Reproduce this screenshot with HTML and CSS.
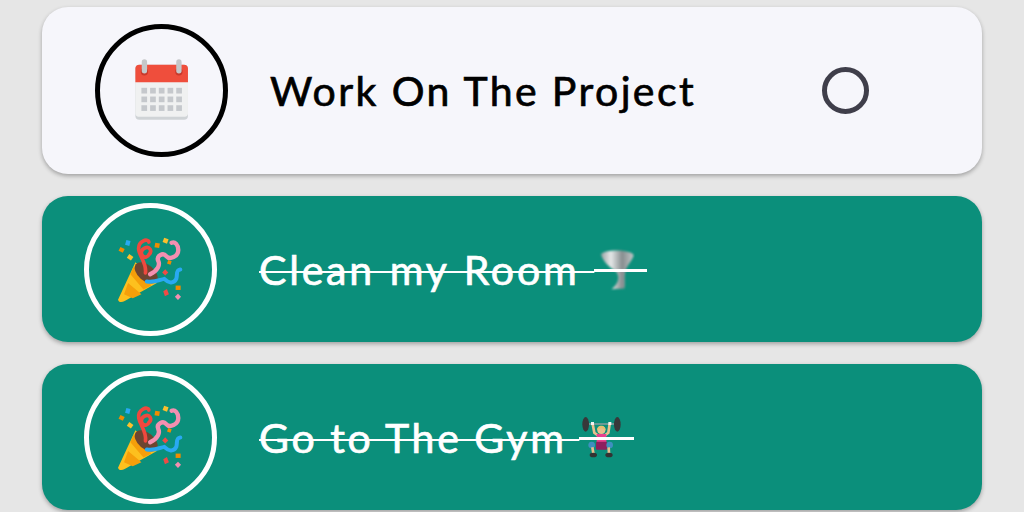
FILE: index.html
```html
<!DOCTYPE html>
<html lang="en">
<head>
  <meta charset="UTF-8">
  <meta name="viewport" content="width=device-width, initial-scale=1.0">
  <title>Tasks</title>
  <link rel="stylesheet" href="styles.css">
</head>
<body>
  <div class="task-list">
    <!-- Open task -->
    <div class="task task-open">
      <div class="task-icon">
        <svg width="67" height="67" viewBox="143 140 200 200">
          <rect x="165" y="163" width="157" height="164" rx="12" fill="#cfd3d6"/>
          <path d="M165 205h157v103a10 10 0 0 1-10 10H175a10 10 0 0 1-10-10z" fill="#f0f1f1"/>
          <path d="M177 163h133a12 12 0 0 1 12 12v40H165v-40a12 12 0 0 1 12-12z" fill="#ef4e3c"/>
          <circle cx="192" cy="184" r="11" fill="#c9392b"/>
          <circle cx="295" cy="184" r="11" fill="#c9392b"/>
          <rect x="184" y="147" width="16" height="42" rx="8" fill="#c5c7c9"/>
          <rect x="287" y="147" width="16" height="42" rx="8" fill="#c5c7c9"/>
          <g fill="#c5c8cc">
            <rect x="183" y="232" width="17" height="17"/><rect x="209" y="232" width="17" height="17"/><rect x="235" y="232" width="17" height="17"/><rect x="261" y="232" width="17" height="17"/><rect x="287" y="232" width="17" height="17"/>
            <rect x="183" y="258" width="17" height="17"/><rect x="209" y="258" width="17" height="17"/><rect x="235" y="258" width="17" height="17"/><rect x="261" y="258" width="17" height="17"/><rect x="287" y="258" width="17" height="17"/>
            <rect x="183" y="284" width="17" height="17"/><rect x="209" y="284" width="17" height="17"/><rect x="235" y="284" width="17" height="17"/><rect x="261" y="284" width="17" height="17"/><rect x="287" y="284" width="17" height="17"/>
          </g>
        </svg>
      </div>
      <div class="task-title">Work On The Project</div>
      <div class="task-check"></div>
    </div>

    <!-- Done tasks -->
    <div class="task task-done">
      <div class="task-icon">
        <svg width="67" height="67" viewBox="143 122 200 200">
          <use href="#popper"/>
        </svg>
      </div>
      <div class="task-title">
        <span class="strike strike-room">Clean my Room&nbsp;</span>
        <span class="emoji emoji-storm">
          <svg width="36" height="43" viewBox="90 25 108 128">
            <defs>
              <linearGradient id="funnel" x1="0" x2="1" y1="0" y2="0">
                <stop offset="0" stop-color="#9aa1a3"/>
                <stop offset="0.3" stop-color="#e6e8e8"/>
                <stop offset="0.65" stop-color="#868d8f"/>
                <stop offset="1" stop-color="#c3c8c9"/>
              </linearGradient>
              <filter id="soft"><feGaussianBlur stdDeviation="2.5"/></filter>
            </defs>
            <path d="M96 44C104 28 186 28 194 46 190 62 174 76 170 92 164 112 170 130 166 146L128 148C146 132 154 116 142 96 124 84 102 66 96 44z" fill="url(#funnel)" filter="url(#soft)"/>
          </svg>
        </span>
      </div>
    </div>

    <div class="task task-done">
      <div class="task-icon">
        <svg width="67" height="67" viewBox="143 122 200 200">
          <g id="popper">
            <path d="M146 312C150 322 158 320 166 316L262 262 198 200z" fill="#fdc01e"/>
            <path d="M164 296 176 262 216 296 190 308zM183 236 192 214 246 270 222 282z" fill="#f59f0a"/>
            <ellipse cx="230" cy="232" rx="40" ry="24" transform="rotate(40 230 232)" fill="#6d4531"/>
            <g fill="none" stroke-linecap="round">
              <path d="M228 232C232 204 212 186 208 164 204 136 236 128 238 140M238 178C250 166 240 152 226 158 216 162 212 174 220 182 226 188 236 184 238 178" stroke="#f0483e" stroke-width="11"/>
              <path d="M242 236C266 224 272 208 266 196 260 182 280 170 290 182 300 194 326 184 326 164 326 148 316 138 306 142" stroke="#f48fb1" stroke-width="13"/>
              <path d="M232 258C256 262 272 252 284 250 296 262 312 266 320 250 324 236 318 224 332 222" stroke="#29a9f2" stroke-width="12"/>
            </g>
            <rect x="169" y="135" width="13" height="15" transform="rotate(15 175 142)" fill="#29a9f2"/>
            <rect x="150" y="157" width="14" height="13" transform="rotate(25 157 163)" fill="#f08c00"/>
            <rect x="175" y="179" width="15" height="13" transform="rotate(35 182 185)" fill="#fbc02d"/>
            <rect x="256" y="143" width="14" height="14" transform="rotate(10 263 150)" fill="#f08c00"/>
            <rect x="281" y="129" width="14" height="14" transform="rotate(20 288 136)" fill="#fbc02d"/>
            <rect x="294" y="195" width="11" height="11" transform="rotate(20 299 200)" fill="#f08c00"/>
            <rect x="281" y="224" width="13" height="13" transform="rotate(45 287 230)" fill="#ef4b45"/>
            <rect x="318" y="270" width="15" height="13" fill="#f08c00"/>
            <path d="M281 287 292 280 298 296 286 302z" fill="#ef4b45"/>
            <rect x="319" y="297" width="13" height="13" transform="rotate(45 325 303)" fill="#f48fb1"/>
          </g>
        </svg>
      </div>
      <div class="task-title">
        <span class="strike strike-gym">Go to The Gym&nbsp;</span>
        <span class="emoji emoji-gym">
          <svg width="43" height="45" viewBox="60 15 129 135">
            <path d="M84 42h82" stroke="#9aa0a3" stroke-width="4"/>
            <ellipse cx="80" cy="43" rx="10" ry="22" fill="#38383a"/>
            <ellipse cx="175" cy="43" rx="10" ry="22" fill="#38383a"/>
            <path d="M101 42 106 68 116 76M152 42 148 68 138 76" fill="none" stroke="#e8bf8e" stroke-width="8"/>
            <rect x="96" y="36" width="9" height="9" fill="#f2f2f2"/>
            <rect x="148" y="36" width="9" height="9" fill="#f2f2f2"/>
            <circle cx="127" cy="60" r="12" fill="#e8bf8e"/>
            <path d="M114 62C112 42 142 42 140 62 134 52 120 52 114 62z" fill="#e2c16f"/>
            <rect x="113" y="72" width="29" height="24" fill="#e7418f"/>
            <rect x="111" y="95" width="33" height="24" rx="3" fill="#8e1f5e"/>
            <circle cx="98" cy="105" r="10" fill="#3f8fbf"/>
            <circle cx="152" cy="105" r="10" fill="#3f8fbf"/>
            <path d="M100 112 103 130M149 112 150 130" stroke="#e8bf8e" stroke-width="8"/>
            <ellipse cx="103" cy="135" rx="11" ry="7" fill="#333"/>
            <ellipse cx="150" cy="135" rx="11" ry="7" fill="#333"/>
          </svg>
        </span>
      </div>
    </div>
  </div>
</body>
</html>
```

FILE: styles.css
```css
html, body {
  margin: 0; padding: 0;
  height: 100%;
  background: #e6e6e6;
  font-family: "Lato", "Noto Sans", sans-serif;
  overflow: hidden;
}
.task-list {
  display: flex;
  flex-direction: column;
  gap: 22px;
  padding: 7px 42px 0;
}
.task {
  display: flex;
  align-items: center;
  border-radius: 26px;
  box-shadow: 0 2px 4px rgba(0, 0, 0, 0.3);
}
.task-open {
  height: 167px;
  padding-left: 53px;
  background: #f6f6fb;
  color: #000;
}
.task-done {
  height: 146px;
  padding-left: 42px;
  background: #0b8f7b;
  color: #fff;
}
.task-icon {
  flex: none;
  width: 133px;
  height: 133px;
  box-sizing: border-box;
  border: 5px solid #000;
  border-radius: 50%;
  display: flex;
  align-items: center;
  justify-content: center;
}
.task-done .task-icon { border-color: #fff; }
.task-title {
  flex: 1;
  display: flex;
  align-items: center;
  margin-left: 42px;
  font-size: 41px;
  font-weight: 400;
  letter-spacing: 2.8px;
  -webkit-text-stroke: 0.7px currentColor;
  white-space: nowrap;
}
.task-open .task-title { letter-spacing: 2.4px; }
.strike {
  text-decoration: line-through;
  text-decoration-thickness: 2px;
}
.strike-room { word-spacing: 1.6px; }
.strike-gym { word-spacing: -0.7px; }
/* emoji sit under their own, thicker piece of the strike line */
.emoji {
  position: relative;
  display: flex;
  align-items: center;
  height: 45px;
}
.emoji::after {
  content: "";
  position: absolute;
  left: 0; right: 0;
  top: 22px;
  height: 3px;
  background: #fff;
}
.emoji-storm { width: 53px; }
.emoji-storm svg { margin-left: 5px; }
.emoji-gym { width: 55px; }
.task-check {
  flex: none;
  width: 47px;
  height: 47px;
  box-sizing: border-box;
  border: 5px solid #3f3e4a;
  border-radius: 50%;
  margin-right: 113px;
}
```
